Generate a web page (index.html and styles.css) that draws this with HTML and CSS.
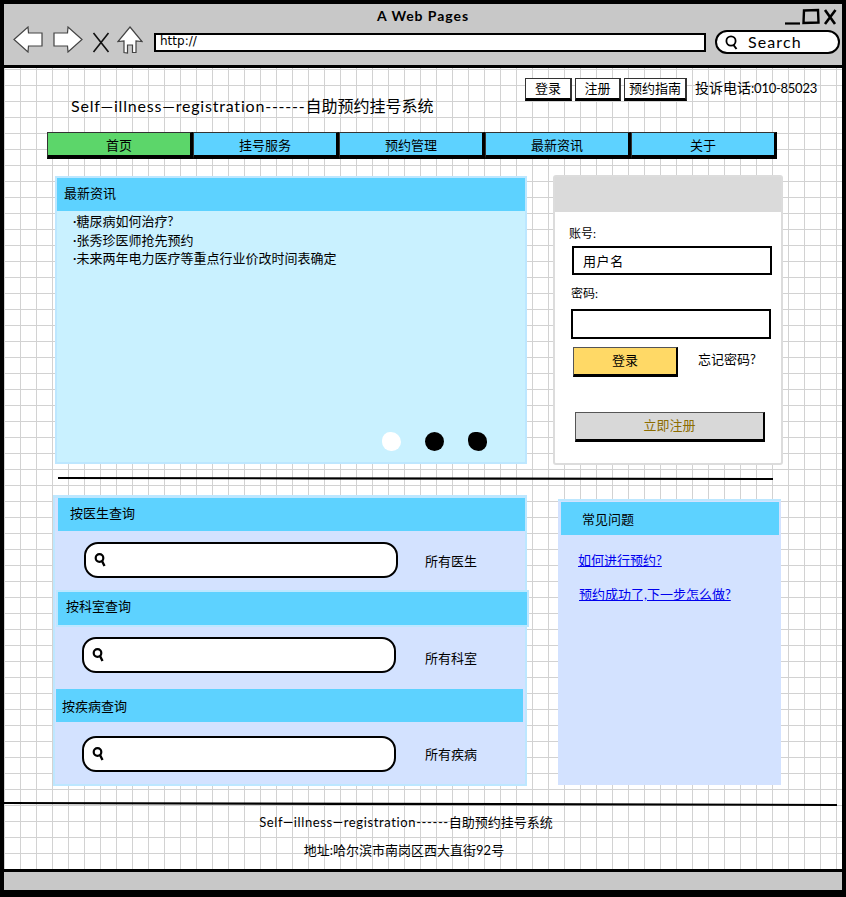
FILE: index.html
```html
<!DOCTYPE html>
<html lang="zh-CN">
<head>
<meta charset="utf-8">
<title>A Web Pages</title>
<link rel="stylesheet" href="styles.css">
</head>
<body>
<div class="window">
  <header class="chrome">
    <div class="titlebar">
      <span class="win-title">A Web Pages</span>
      <div class="win-controls">
        <svg class="win-icons" width="54" height="18" viewBox="0 0 54 18"><path d="M1 15.5 L16 15.5" stroke="#000" stroke-width="2.2" fill="none"/><path d="M20 2.5 L34 2 L34.5 14.5 L19.5 15 Z" stroke="#000" stroke-width="2.4" fill="none"/><path d="M41 2 L51 16 M51.5 2 L41 16" stroke="#000" stroke-width="2.6" fill="none"/></svg>
      </div>
    </div>
    <div class="toolbar">
      <svg class="tool tool-back" width="30" height="27" viewBox="0 0 30 27"><path d="M1 13.5 L15 1 L15.5 7 L29 7 L29 20 L15.5 20 L15 26 Z" fill="#fff" stroke="#444" stroke-width="1.2"/></svg>
      <svg class="tool tool-fwd" width="30" height="27" viewBox="0 0 30 27"><path d="M29 13.5 L15 1 L14.5 7 L1 7 L1 20 L14.5 20 L15 26 Z" fill="#fff" stroke="#444" stroke-width="1.2"/></svg>
      <svg class="tool tool-stop" width="18" height="21" viewBox="0 0 18 21"><path d="M1.5 1 L16.5 20 M16.5 1 L1.5 20" stroke="#111" stroke-width="1.6" fill="none"/></svg>
      <svg class="tool tool-home" width="26" height="28" viewBox="0 0 26 28"><path d="M13 1 L25 15.5 L19 15 L19 26.5 L15.5 26.5 L15.5 19 L10.5 19 L10.5 27 L7 26.5 L7 15 L1 15.5 Z" fill="#fff" stroke="#444" stroke-width="1.2"/></svg>
      <div class="address">http://</div>
      <div class="websearch">
        <svg width="14" height="15" viewBox="0 0 14 15"><circle cx="6" cy="6" r="4.6" fill="none" stroke="#000" stroke-width="1.8"/><path d="M8.5 10 L11.5 14" stroke="#000" stroke-width="2" fill="none"/></svg>
        <span>Search</span>
      </div>
    </div>
  </header>

  <main class="canvas">
    <div class="masthead">
      <h1 class="brand"><span class="brand-latin">Self—illness—registration------</span>自助预约挂号系统</h1>
      <div class="actions">
        <a class="mini-btn mini-login">登录</a>
        <a class="mini-btn mini-reg">注册</a>
        <a class="mini-btn mini-guide">预约指南</a>
        <span class="phone">投诉电话<span class="phone-num">:010-85023</span></span>
      </div>
    </div>

    <nav class="nav">
      <a class="nav-item nav-active">首页</a>
      <a class="nav-item">挂号服务</a>
      <a class="nav-item">预约管理</a>
      <a class="nav-item">最新资讯</a>
      <a class="nav-item">关于</a>
    </nav>

    <section class="row row-top">
      <div class="news">
        <h2 class="news-head">最新资讯</h2>
        <ul class="news-list">
          <li>·糖尿病如何治疗?</li>
          <li>·张秀珍医师抢先预约</li>
          <li>·未来两年电力医疗等重点行业价改时间表确定</li>
        </ul>
        <div class="dots">
          <span class="dot dot-on"></span>
          <span class="dot"></span>
          <span class="dot dot-blob"></span>
        </div>
      </div>

      <form class="login">
        <div class="login-head"></div>
        <label class="field-label label-user">账号:</label>
        <input class="field field-user" type="text" value="用户名">
        <label class="field-label label-pass">密码:</label>
        <input class="field field-pass" type="text">
        <div class="login-actions">
          <button class="btn btn-login" type="button">登录</button>
          <span class="forgot">忘记密码?</span>
        </div>
        <button class="btn btn-register" type="button">立即注册</button>
      </form>
    </section>

    <div class="rule rule-mid"></div>

    <section class="row row-bottom">
      <div class="finder">
        <h2 class="bar bar-doctor">按医生查询</h2>
        <div class="query query-doctor">
          <div class="searchbox"><svg width="13" height="14" viewBox="0 0 13 14"><circle cx="5.5" cy="5" r="3.8" fill="none" stroke="#000" stroke-width="2.2"/><path d="M8 8 L10.5 13" stroke="#000" stroke-width="2.4" fill="none"/></svg></div>
          <span class="query-label">所有医生</span>
        </div>
        <h2 class="bar bar-dept">按科室查询</h2>
        <div class="query query-dept">
          <div class="searchbox"><svg width="13" height="14" viewBox="0 0 13 14"><circle cx="5.5" cy="5" r="3.8" fill="none" stroke="#000" stroke-width="2.2"/><path d="M8 8 L10.5 13" stroke="#000" stroke-width="2.4" fill="none"/></svg></div>
          <span class="query-label">所有科室</span>
        </div>
        <h2 class="bar bar-illness">按疾病查询</h2>
        <div class="query query-illness">
          <div class="searchbox"><svg width="13" height="14" viewBox="0 0 13 14"><circle cx="5.5" cy="5" r="3.8" fill="none" stroke="#000" stroke-width="2.2"/><path d="M8 8 L10.5 13" stroke="#000" stroke-width="2.4" fill="none"/></svg></div>
          <span class="query-label">所有疾病</span>
        </div>
      </div>

      <aside class="faq">
        <h2 class="faq-head">常见问题</h2>
        <a class="faq-link faq-link-a" href="#">如何进行预约?</a>
        <a class="faq-link faq-link-b" href="#">预约成功了,下一步怎么做?</a>
      </aside>
    </section>

    <div class="rule rule-foot"></div>

    <footer class="footer">
      <p class="foot-line foot-a"><span class="foot-latin">Self—illness—registration------</span>自助预约挂号系统</p>
      <p class="foot-line foot-b">地址:哈尔滨市南岗区西大直街92号</p>
    </footer>
  </main>

  <div class="statusbar"></div>
</div>
</body>
</html>
```

FILE: styles.css
```css
* { box-sizing: border-box; }
html, body { margin: 0; padding: 0; }
body {
  width: 846px;
  height: 897px;
  overflow: hidden;
  font-family: "Lato", "Noto Sans CJK SC", sans-serif;
  font-size: 13px;
  color: #000;
}
h1, h2, p, ul { margin: 0; padding: 0; font-weight: normal; }
ul { list-style: none; }

.window {
  width: 846px;
  height: 897px;
  display: flex;
  flex-direction: column;
  background: #000;
  border-style: solid;
  border-color: #000;
  border-width: 4px 4px 7px 4px;
}

/* browser chrome */
.chrome {
  height: 64px;
  flex: none;
  background: #c8c8c8;
  border-bottom: 3px solid #000;
}
.titlebar {
  height: 22px;
  display: flex;
  justify-content: center;
  position: relative;
}
.win-title {
  font-size: 14px;
  font-weight: 700;
  line-height: 24px;
  letter-spacing: 0.95px;
}
.win-controls {
  position: absolute;
  right: 4px;
  top: 4px;
}
.win-icons { display: block; }
.toolbar {
  display: flex;
  align-items: flex-start;
  padding-left: 9px;
}
.tool { flex: none; display: block; }
.tool-fwd { margin-left: 10px; }
.tool-stop { margin: 6px 0 0 9px; }
.tool-home { margin-left: 7px; }
.address {
  margin: 7px 0 0 11px;
  width: 552px;
  height: 19px;
  background: #fff;
  border: 2px solid #000;
  font-family: "DejaVu Sans", sans-serif;
  font-size: 12px;
  line-height: 13px;
  padding-left: 4px;
}
.websearch {
  margin: 4px 0 0 9px;
  width: 125px;
  height: 24px;
  background: #fff;
  border: 2px solid #000;
  border-radius: 12px;
  display: flex;
  align-items: center;
  padding-left: 8px;
}
.websearch svg { display: block; }
.websearch span {
  margin-left: 9px;
  font-size: 16px;
  line-height: 20px;
  letter-spacing: 1.1px;
}

/* page */
.canvas {
  flex: 1;
  min-height: 0;
  position: relative;
  background-color: #fff;
  background-image:
    linear-gradient(to right, #d2d2d2 1px, transparent 1px),
    linear-gradient(to bottom, #d2d2d2 1px, transparent 1px);
  background-size: 16px 16px;
  background-position: 0 1px;
}

.masthead {
  height: 64px;
  display: flex;
  justify-content: space-between;
  padding: 10px 25px 0 67px;
}
.brand {
  margin-top: 18px;
  font-size: 16px;
  line-height: 20px;
}
.brand-latin { letter-spacing: 0.8px; }
.actions {
  display: flex;
  align-items: flex-start;
  gap: 3px;
}
.mini-btn {
  height: 23px;
  background: #fff;
  border: 1px solid #333;
  border-bottom-width: 3px;
  border-right-width: 2px;
  border-bottom-color: #000;
  text-align: center;
  font-size: 13px;
  line-height: 18px;
}
.mini-login { width: 47px; }
.mini-reg { width: 46px; }
.mini-guide { width: 63px; }
.phone {
  margin-left: 5px;
  font-size: 14px;
  line-height: 20px;
}
.phone-num {
  font-size: 13px;
  letter-spacing: -0.25px;
}

.nav {
  margin-left: 43px;
  width: 730px;
  height: 27px;
  display: flex;
}
.nav-item {
  width: 146px;
  height: 27px;
  background: #5dd2ff;
  border: 1px solid #333;
  border-right: 3px solid #000;
  border-bottom: 4px solid #000;
  text-align: center;
  font-size: 13px;
  line-height: 24px;
}
.nav-active { background: #5cd66a; }

.row { display: flex; align-items: flex-start; }
.row-top { margin: 16px 0 0 51px; }
.row-bottom { margin: 15px 0 0 49px; }

.news {
  margin-top: 1px;
  width: 472px;
  height: 288px;
  background: #c9f1ff;
  border: 2px solid #bde7ff;
  position: relative;
}
.news-head {
  height: 33px;
  background: #5dd2ff;
  font-size: 13px;
  line-height: 31px;
  padding-left: 7px;
}
.news-list {
  margin-top: 1px;
  padding: 0 0 0 16px;
  font-size: 13px;
  line-height: 18.5px;
}
.dots {
  position: absolute;
  left: 325px;
  top: 254px;
  display: flex;
  gap: 24px;
}
.dot {
  width: 19px;
  height: 19px;
  border-radius: 50%;
  background: #000;
}
.dot-on {
  background: #fff;
  border-radius: 45% 55% 50% 50%;
}
.dot-blob { border-radius: 40% 55% 50% 60%; }

.login {
  margin-left: 26px;
  width: 230px;
  height: 290px;
  background: #fff;
  border: 2px solid #dcdcdc;
  border-radius: 3px;
  display: flex;
  flex-direction: column;
  align-items: flex-start;
}
.login-head {
  align-self: stretch;
  height: 35px;
  background: #dadada;
}
.field-label {
  font-size: 12px;
  line-height: 16px;
}
.label-user { margin: 14px 0 0 14px; }
.label-pass { margin: 11px 0 0 16px; }
.field {
  display: block;
  background: #fff;
  border: 2px solid #000;
  border-radius: 0;
  outline: 0;
  font-family: "Noto Sans CJK SC", sans-serif;
  font-size: 13px;
  letter-spacing: 0.6px;
  color: #000;
  padding: 0 0 0 9px;
}
.field-user {
  margin: 4px 0 0 17px;
  width: 200px;
  height: 29px;
}
.field-pass {
  margin: 7px 0 0 16px;
  width: 200px;
  height: 30px;
}
.login-actions {
  margin: 8px 0 0 18px;
  display: flex;
  align-items: flex-start;
}
.btn {
  padding: 0 0 4px;
  font-family: "Noto Sans CJK SC", sans-serif;
  font-size: 13px;
  border-style: solid;
  border-color: #555 #000 #000 #555;
  border-width: 1px 2px 3px 1px;
}
.btn-login {
  width: 105px;
  height: 30px;
  background: #ffd966;
  color: #000;
}
.forgot {
  margin: 3px 0 0 20px;
  font-size: 13px;
  line-height: 18px;
}
.btn-register {
  margin: 35px 0 0 20px;
  width: 190px;
  height: 30px;
  background: #d8d8d8;
  color: #8c6d00;
}

.rule { background: #000; }
.rule-mid {
  margin: 12px 0 0 54px;
  width: 715px;
  height: 3px;
  clip-path: polygon(0 0, 100% 30%, 100% 100%, 35% 80%, 0 70%);
}
.rule-foot {
  margin-top: 16px;
  width: 833px;
  height: 4px;
  clip-path: polygon(0 0, 60% 25%, 100% 50%, 100% 100%, 40% 75%, 0 50%);
}

.finder {
  width: 474px;
  height: 291px;
  background: #d3e2ff;
  border: 2px solid #bde7ff;
  border-top-width: 3px;
}
.bar {
  height: 33px;
  background: #5dd2ff;
  font-size: 13px;
}
.bar-doctor { margin: 0 0 0 3px; padding-left: 12px; line-height: 31px; }
.bar-dept {
  margin: 0 -2px 0 3px;
  padding-left: 8px;
  line-height: 29px;
  outline: 2px solid #bde7ff;
}
.bar-illness { margin: 0 2px 0 1px; padding-left: 6px; line-height: 35px; }
.query {
  display: flex;
  align-items: flex-start;
}
.query-doctor { height: 61px; padding: 11px 0 0 29px; }
.query-dept { height: 64px; padding: 12px 0 0 27px; }
.query-illness { height: 61px; padding: 14px 0 0 27px; }
.searchbox {
  flex: none;
  width: 314px;
  height: 36px;
  background: #fff;
  border: 2px solid #000;
  border-radius: 14px;
  padding: 9px 0 0 8px;
}
.searchbox svg { display: block; }
.query-label {
  font-size: 13px;
  line-height: 18px;
}
.query-doctor .query-label { margin: 10px 0 0 27px; }
.query-dept .query-label { margin: 12px 0 0 29px; }
.query-illness .query-label { margin: 9px 0 0 29px; }

.faq {
  margin: 4px 0 0 31px;
  width: 223px;
  height: 286px;
  background: #d3e2ff;
  display: flex;
  flex-direction: column;
  align-items: flex-start;
  border-top: 2px solid #bde7ff;
}
.faq-head {
  align-self: stretch;
  margin: 1px 2px 0 3px;
  height: 33px;
  background: #5dd2ff;
  font-size: 13px;
  line-height: 35px;
  padding-left: 21px;
}
.faq-link {
  font-size: 13px;
  line-height: 18px;
  color: #0000ee;
}
.faq-link-a { margin: 16px 0 0 20px; }
.faq-link-b { margin: 16px 0 0 21px; }

.footer {
  margin-top: -1px;
  padding-top: 3px;
}
.foot-line {
  font-size: 13px;
  line-height: 28px;
  text-align: center;
}
.foot-latin { letter-spacing: 0.62px; }
.foot-a { padding-right: 34px; }
.foot-b { padding-right: 38px; }

.statusbar {
  flex: none;
  height: 21px;
  background: #c8c8c8;
  border-top: 3px solid #000;
}
```
